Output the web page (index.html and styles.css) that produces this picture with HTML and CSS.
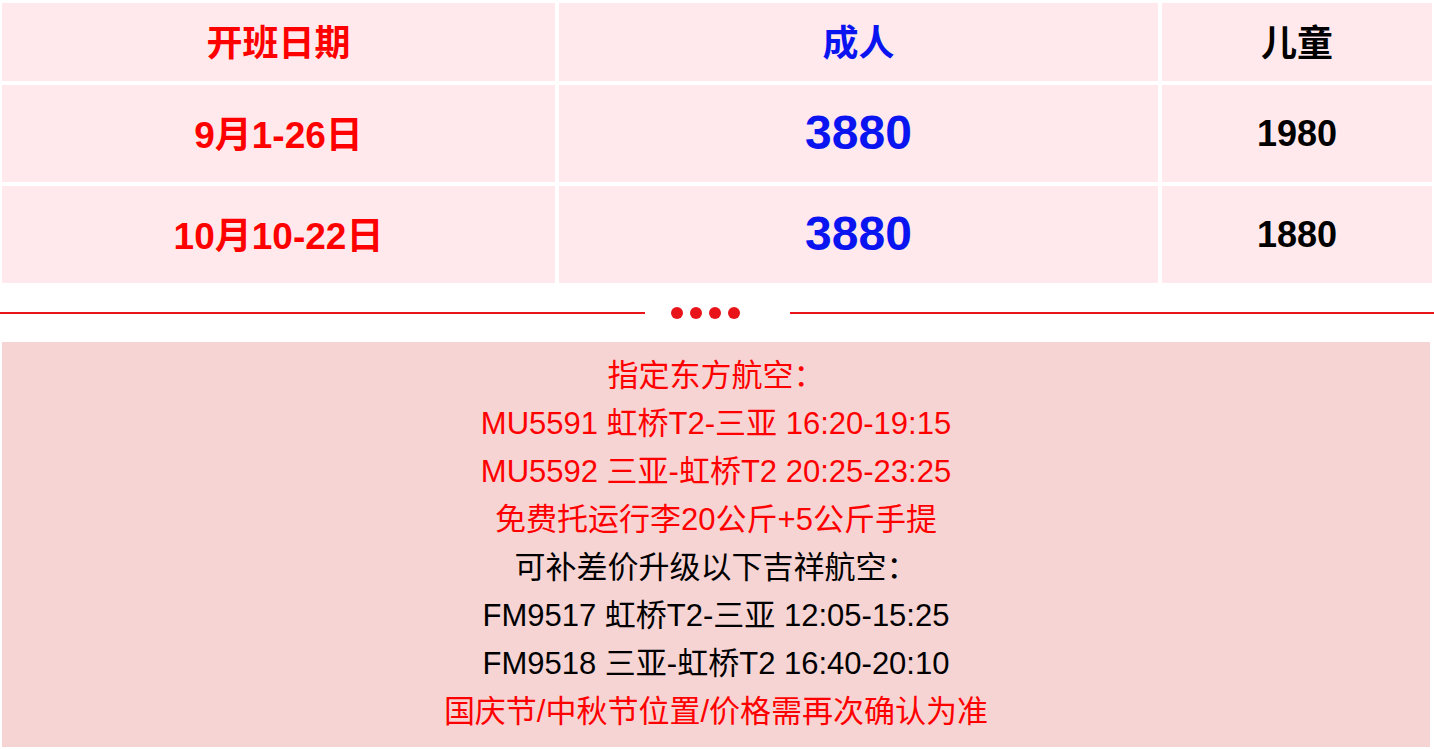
FILE: index.html
```html
<!DOCTYPE html>
<html lang="zh-CN">
<head>
<meta charset="utf-8">
<link rel="stylesheet" href="styles.css">
</head>
<body>
<div class="price-grid">
  <div class="cell head red">开班日期</div>
  <div class="cell head blue">成人</div>
  <div class="cell head black">儿童</div>

  <div class="cell red date">9月1-26日</div>
  <div class="cell blue big">3880</div>
  <div class="cell black num">1980</div>

  <div class="cell red date">10月10-22日</div>
  <div class="cell blue big">3880</div>
  <div class="cell black num">1880</div>
</div>

<div class="divider">
  <span class="line"></span>
  <span class="dots"><i></i><i></i><i></i><i></i></span>
  <span class="line"></span>
</div>

<div class="info">
  <p class="red">指定东方航空：</p>
  <p class="red">MU5591 虹桥T2-三亚 16:20-19:15</p>
  <p class="red">MU5592 三亚-虹桥T2 20:25-23:25</p>
  <p class="red">免费托运行李20公斤+5公斤手提</p>
  <p class="black">可补差价升级以下吉祥航空：</p>
  <p class="black">FM9517 虹桥T2-三亚 12:05-15:25</p>
  <p class="black">FM9518 三亚-虹桥T2 16:40-20:10</p>
  <p class="red">国庆节/中秋节位置/价格需再次确认为准</p>
</div>
</body>
</html>
```

FILE: styles.css
```css
html, body {
  margin: 0;
  padding: 0;
  background: #ffffff;
}

body {
  font-family: "Liberation Sans", Arial, "Noto Sans CJK SC", sans-serif;
  width: 1434px;
}

.price-grid {
  display: grid;
  grid-template-columns: 553px 599px 270px;
  grid-template-rows: 78px 97px 97px;
  gap: 4px 4px;
  padding: 3px 0 0 2px;
}

.cell {
  background: #ffe9ec;
  display: flex;
  align-items: center;
  justify-content: center;
  font-weight: bold;
  font-size: 36px;
  padding-bottom: 4px;
  box-sizing: border-box;
}

.date {
  font-size: 37px;
}

.num {
  padding-bottom: 0;
}

.red { color: #ff0000; }
.blue { color: #0a14f0; }
.black { color: #000000; }

.big {
  font-size: 48px;
  padding-bottom: 2px;
}

.divider {
  display: flex;
  align-items: center;
  height: 58px;
  padding-top: 2px;
  box-sizing: border-box;
}

.line {
  flex: 1;
  height: 2px;
  background: #e8141a;
}

.dots {
  width: 145px;
  display: flex;
  justify-content: center;
  gap: 7px;
  padding-right: 24px;
  box-sizing: border-box;
}

.dots i {
  display: block;
  width: 12px;
  height: 12px;
  border-radius: 50%;
  background: #e8141a;
}

.info {
  margin: 1px 4px 0 2px;
  background: #f6d4d4;
  padding: 10px 0 11px;
  text-align: center;
  font-size: 31px;
}

.info p {
  margin: 0;
  line-height: 48px;
}
```
